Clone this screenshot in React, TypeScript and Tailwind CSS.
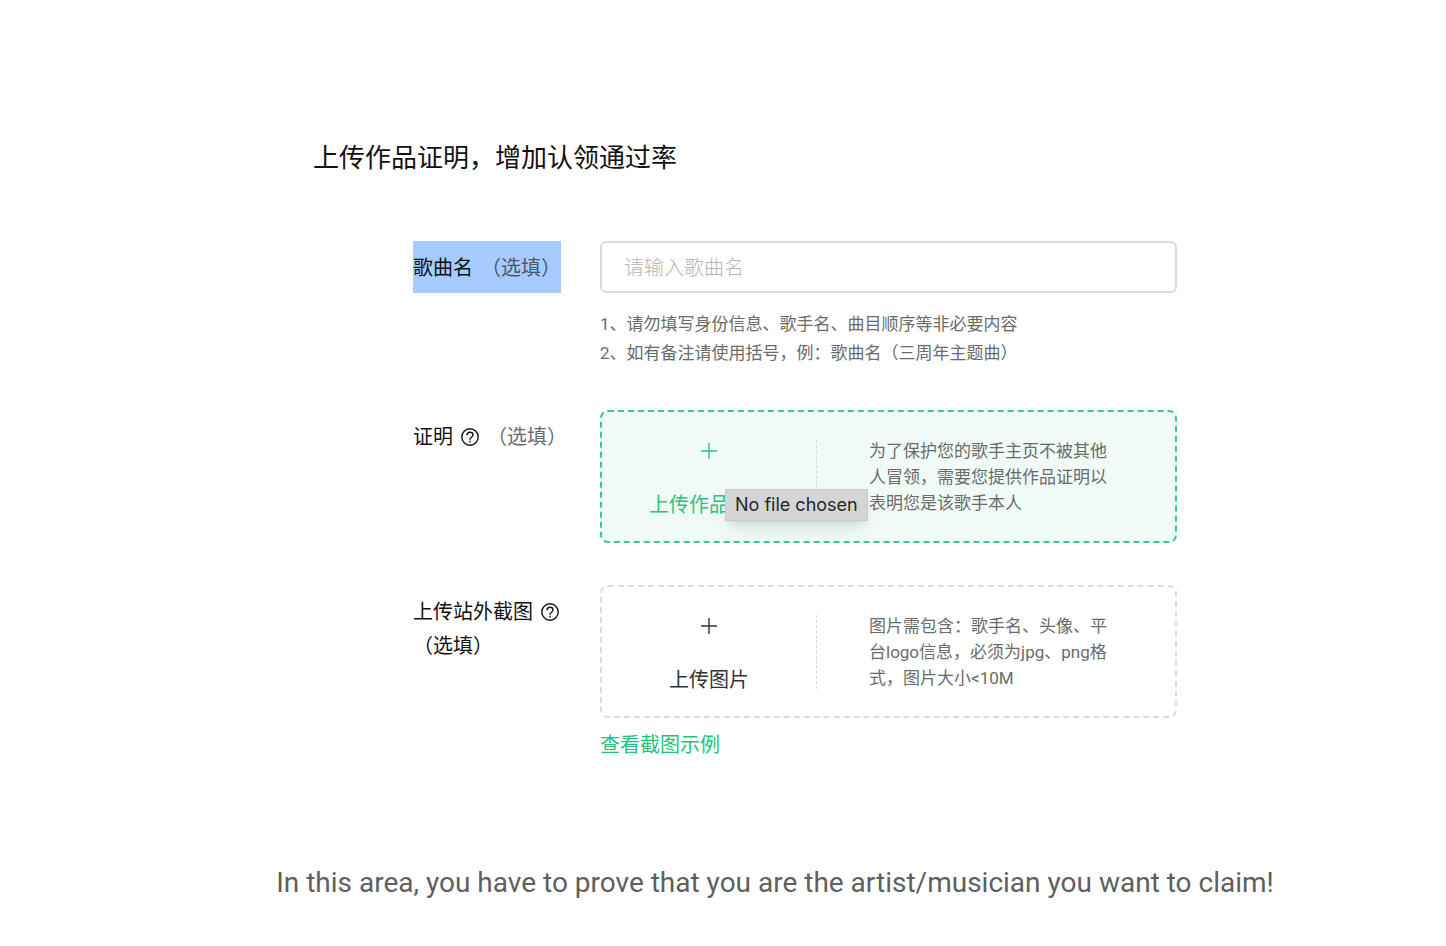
import type { ReactNode } from "react";

function HelpIcon() {
  return (
    <svg
      viewBox="0 0 18 18"
      className="size-[18px] shrink-0"
      fill="none"
      stroke="currentColor"
      strokeWidth="1.4"
      role="img"
      aria-label="帮助"
    >
      <circle cx="9" cy="9" r="8.2" />
      <path d="M6 7.3c0-1.9 1.2-3 3-3s3 1.1 3 2.6c0 1.2-.8 1.8-1.6 2.4-.8.6-1.4 1.1-1.4 2.1v.4" />
      <path d="M9 12.8v1.6" />
    </svg>
  );
}

function PlusIcon() {
  return (
    <svg
      viewBox="0 0 16 16"
      className="size-4"
      fill="none"
      stroke="currentColor"
      strokeWidth="1.4"
      aria-hidden="true"
    >
      <path d="M8 0v16M0 8h16" />
    </svg>
  );
}

function Row({ label, children }: { label: ReactNode; children: ReactNode }) {
  return (
    <div className="flex items-start pl-[100px]">
      <div className="w-[187px] shrink-0 text-xl/[34px] text-[#111]">{label}</div>
      <div className="max-w-[577px] min-w-0 flex-1">{children}</div>
    </div>
  );
}

type UploadBoxProps = {
  id: string;
  title: string;
  description: string;
  active?: boolean;
  tooltip?: string;
};

function UploadBox({ id, title, description, active, tooltip }: UploadBoxProps) {
  return (
    <div
      className={
        active
          ? "relative flex items-center rounded-lg border-2 border-dashed border-[#3cc78d] bg-[#f0faf6]"
          : "relative flex items-center rounded-lg border-2 border-dashed border-[#dcdcdc]"
      }
    >
      <label
        htmlFor={id}
        className={
          active
            ? "flex w-[214px] shrink-0 cursor-pointer flex-col items-center gap-8 pt-[31px] pb-[22px] text-xl/[28px] text-[#2bc47e]"
            : "flex w-[214px] shrink-0 cursor-pointer flex-col items-center gap-8 pt-[31px] pb-[22px] text-xl/[28px] text-[#333]"
        }
      >
        <PlusIcon />
        {title}
      </label>
      <input id={id} type="file" className="sr-only" />
      <div className="h-[74px] border-l border-dashed border-[#d5dbd9]" />
      <p className="ml-[52px] w-[242px] text-[17px]/[26px] text-[#6b6b6b]">{description}</p>
      {tooltip && (
        <div
          role="tooltip"
          className="absolute top-[77px] left-[123px] border border-[#cbcbcb] bg-[#d6d5d5] px-[9px] font-['Inter',sans-serif] text-lg/[30px] whitespace-nowrap text-[#262626] shadow-lg"
        >
          {tooltip}
        </div>
      )}
    </div>
  );
}

export default function App() {
  return (
    <main className="min-h-screen bg-white pt-[138px] pl-[104px] font-['Roboto','Noto_Sans_CJK_SC',sans-serif]">
      <form className="mx-auto max-w-[924px]" onSubmit={(event) => event.preventDefault()}>
        <h1 className="text-[26px]/[40px] text-[#111]">上传作品证明，增加认领通过率</h1>

        <div className="mt-[63px] flex flex-col gap-[42px]">
          <Row
            label={
              <label
                htmlFor="song"
                className="flex h-[52px] w-[148px] items-center gap-2 bg-[#a6cbff] pt-0.5"
              >
                歌曲名<span className="text-[#4d5866]">（选填）</span>
              </label>
            }
          >
            <input
              id="song"
              type="text"
              placeholder="请输入歌曲名"
              className="block h-[52px] w-full rounded-md border-2 border-[#dadada] px-[22px] pt-0.5 text-xl font-light placeholder:text-[#b5b5b5]"
            />
            <div className="mt-[17px] text-[17px]/[29px] text-[#6b6b6b]">
              <p>1、请勿填写身份信息、歌手名、曲目顺序等非必要内容</p>
              <p>2、如有备注请使用括号，例：歌曲名（三周年主题曲）</p>
            </div>
          </Row>

          <Row
            label={
              <label htmlFor="proof" className="flex items-center gap-2 pt-[10px]">
                证明
                <HelpIcon />
                <span className="text-[#6b6b6b]">（选填）</span>
              </label>
            }
          >
            <UploadBox
              id="proof"
              title="上传作品证明"
              description="为了保护您的歌手主页不被其他人冒领，需要您提供作品证明以表明您是该歌手本人"
              active
              tooltip="No file chosen"
            />
          </Row>

          <Row
            label={
              <label htmlFor="screenshot" className="block pt-[10px]">
                <span className="flex items-center gap-2">
                  上传站外截图
                  <HelpIcon />
                </span>
                （选填）
              </label>
            }
          >
            <UploadBox
              id="screenshot"
              title="上传图片"
              description="图片需包含：歌手名、头像、平台logo信息，必须为jpg、png格式，图片大小<10M"
            />
            <a href="#example" className="mt-3 inline-block text-xl/[30px] text-[#1fc47a]">
              查看截图示例
            </a>
          </Row>
        </div>
      </form>

      <p className="mt-[103px] pb-8 text-center text-[28px]/[40px] text-[#5f5f5f]">
        In this area, you have to prove that you are the artist/musician you want to claim!
      </p>
    </main>
  );
}
